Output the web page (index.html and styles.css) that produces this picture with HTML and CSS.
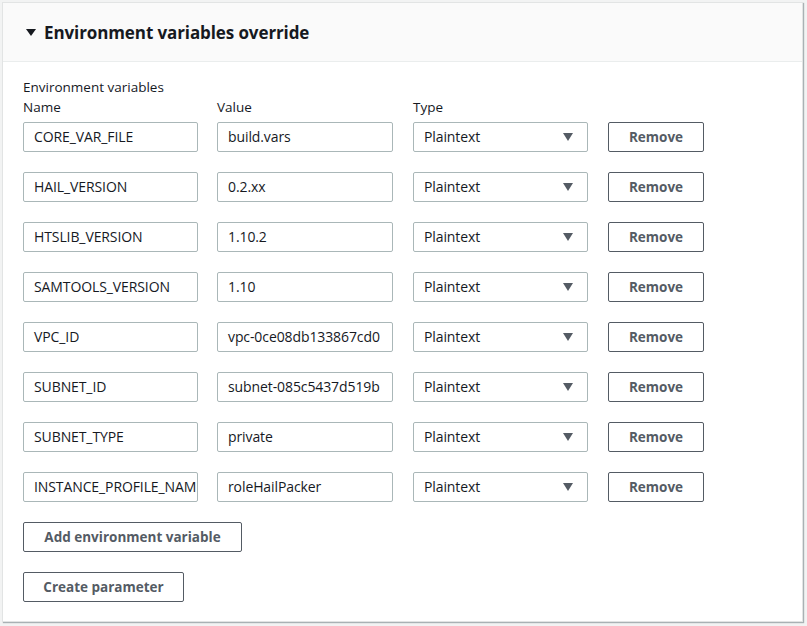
FILE: index.html
```html
<!DOCTYPE html>
<html>
<head>
<meta charset="utf-8">
<link rel="stylesheet" href="styles.css">
</head>
<body>
<div class="panel">
  <div class="panel-header">
    <span class="caret"></span>
    <h2 class="title">Environment variables override</h2>
  </div>
  <div class="panel-body">
    <div class="group-label">Environment variables</div>
    <div class="grid labels">
      <div class="col-label">Name</div>
      <div class="col-label">Value</div>
      <div class="col-label">Type</div>
      <div></div>
    </div>
    <div class="grid rows">
      <div class="input">CORE_VAR_FILE</div>
      <div class="input">build.vars</div>
      <div class="select">Plaintext<span class="arrow"></span></div>
      <div class="btn btn-remove">Remove</div>

      <div class="input">HAIL_VERSION</div>
      <div class="input">0.2.xx</div>
      <div class="select">Plaintext<span class="arrow"></span></div>
      <div class="btn btn-remove">Remove</div>

      <div class="input">HTSLIB_VERSION</div>
      <div class="input">1.10.2</div>
      <div class="select">Plaintext<span class="arrow"></span></div>
      <div class="btn btn-remove">Remove</div>

      <div class="input">SAMTOOLS_VERSION</div>
      <div class="input">1.10</div>
      <div class="select">Plaintext<span class="arrow"></span></div>
      <div class="btn btn-remove">Remove</div>

      <div class="input">VPC_ID</div>
      <div class="input">vpc-0ce08db133867cd0</div>
      <div class="select">Plaintext<span class="arrow"></span></div>
      <div class="btn btn-remove">Remove</div>

      <div class="input">SUBNET_ID</div>
      <div class="input">subnet-085c5437d519b</div>
      <div class="select">Plaintext<span class="arrow"></span></div>
      <div class="btn btn-remove">Remove</div>

      <div class="input">SUBNET_TYPE</div>
      <div class="input">private</div>
      <div class="select">Plaintext<span class="arrow"></span></div>
      <div class="btn btn-remove">Remove</div>

      <div class="input">INSTANCE_PROFILE_NAME</div>
      <div class="input">roleHailPacker</div>
      <div class="select">Plaintext<span class="arrow"></span></div>
      <div class="btn btn-remove">Remove</div>
    </div>
    <div class="actions">
      <div class="btn btn-add">Add environment variable</div>
      <div class="btn btn-create">Create parameter</div>
    </div>
  </div>
</div>
</body>
</html>
```
FILE: styles.css
```css
* { box-sizing: border-box; }
html, body { margin: 0; padding: 0; }
body {
  background: #f2f3f3;
  font-family: "Open Sans", "Noto Sans", sans-serif;
  color: #16191f;
  width: 807px;
  height: 626px;
  padding: 2px 3px 0 2px;
}
.panel {
  background: #fff;
  border: 1px solid #e2e4e4;
  box-shadow: 1px 1px 1px 0 rgba(0, 28, 36, 0.3);
  width: 801px;
  height: 620px;
}
.panel-header {
  background: #fafafa;
  border-bottom: 1px solid #eaeded;
  height: 59px;
  display: flex;
  align-items: center;
  padding-left: 23px;
}
.caret {
  width: 0;
  height: 0;
  border-left: 5px solid transparent;
  border-right: 5px solid transparent;
  border-top: 7px solid #16191f;
  margin-right: 8px;
  margin-top: 1px;
}
.title {
  margin: 0;
  font-size: 17px;
  font-weight: 700;
  letter-spacing: -0.1px;
  color: #16191f;
}
.panel-body {
  padding: 15px 0 0 20px;
}
.group-label {
  font-size: 13.5px;
  line-height: 20px;
  color: #16191f;
}
.grid {
  display: grid;
  grid-template-columns: 175px 176px 175px 96px;
  column-gap: 19px;
}
.grid > :nth-child(4n+3) { margin-left: 1px; }
.grid > :nth-child(4n) { margin-left: 1px; }
.grid.rows { grid-template-columns: 175px 176px 176px 97px; }
.grid.rows > :nth-child(4n) { margin-left: 1px; width: 96px; }
.grid.rows > :nth-child(4n+3) { margin-left: 1px; width: 175px; }
.labels { margin-bottom: 5px; }
.rows { row-gap: 20px; }
.col-label {
  font-size: 13.5px;
  line-height: 20px;
}
.input, .select {
  height: 30px;
  border: 1px solid #aab7b8;
  border-radius: 2px;
  font-size: 14px;
  line-height: 28px;
  padding: 0 10px;
  white-space: nowrap;
  overflow: hidden;
  color: #16191f;
  letter-spacing: -0.1px;
}
.select {
  display: flex;
  justify-content: space-between;
  align-items: center;
  padding-right: 14px;
}
.arrow {
  width: 0;
  height: 0;
  border-left: 5px solid transparent;
  border-right: 5px solid transparent;
  border-top: 8px solid #545b64;
}
.btn {
  height: 30px;
  border: 1px solid #545b64;
  border-radius: 2px;
  font-size: 13.5px;
  font-weight: 700;
  color: #545b64;
  display: flex;
  align-items: center;
  justify-content: center;
  background: #fff;
}
.actions {
  display: flex;
  flex-direction: column;
  align-items: flex-start;
  gap: 20px;
  margin-top: 20px;
}
.btn-add { width: 219px; }
.btn-create { width: 161px; }
```
